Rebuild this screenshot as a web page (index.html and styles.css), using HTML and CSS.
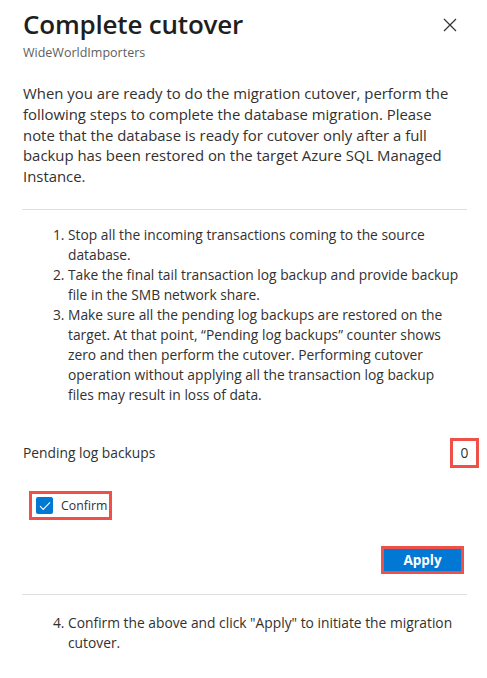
FILE: index.html
```html
<!DOCTYPE html>
<html>
<head>
<meta charset="utf-8">
<link rel="stylesheet" href="styles.css">
</head>
<body>
<div class="panel">
  <header class="head">
    <div class="titles">
      <h1 class="title">Complete cutover</h1>
      <div class="subtitle">WideWorldImporters</div>
    </div>
    <button class="close" aria-label="Close">
      <svg width="14" height="14" viewBox="0 0 14 14"><path d="M1 1L13 13M13 1L1 13" stroke="#323130" stroke-width="1.2" fill="none"/></svg>
    </button>
  </header>
  <p class="intro">When you are ready to do the migration cutover, perform the<br>following steps to complete the database migration. Please<br>note that the database is ready for cutover only after a full<br>backup has been restored on the target Azure SQL Managed<br>Instance.</p>
  <hr class="sep">
  <ol class="steps">
    <li>Stop all the incoming transactions coming to the source database.</li>
    <li>Take the final tail transaction log backup and provide backup file in the SMB network share.</li>
    <li>Make sure all the pending log backups are restored on the target. At that point, “Pending log backups” counter shows zero and then perform the cutover. Performing cutover operation without applying all the transaction log backup files may result in loss of data.</li>
  </ol>
  <div class="pending">
    <span>Pending log backups</span>
    <span class="count hl">0</span>
  </div>
  <div class="confirm-row">
    <label class="confirm hl">
      <span class="box"><svg width="12" height="10" viewBox="0 0 12 10"><path d="M1 5.2L4.2 8.4L11 1.4" stroke="#fff" stroke-width="1.1" fill="none"/></svg></span>
      <span>Confirm</span>
    </label>
  </div>
  <div class="actions">
    <button class="apply hl">Apply</button>
  </div>
  <hr class="sep sep2">
  <ol class="steps last" start="4">
    <li>Confirm the above and click "Apply" to initiate the migration cutover.</li>
  </ol>
</div>
</body>
</html>
```
FILE: styles.css
```css
* { box-sizing: border-box; }
html, body { margin: 0; padding: 0; background: #fff; }
body { font-family: "Open Sans", "Noto Sans", sans-serif; color: #323130; }
.panel { width: 487px; padding: 0 20px 0 22px; }
.head { display: flex; justify-content: space-between; align-items: flex-start; padding-top: 6px; }
.titles { padding-left: 1px; }
.title { margin: 0; font-size: 26px; font-weight: 600; line-height: 36px; color: #201f1e; letter-spacing: -0.2px; }
.subtitle { font-size: 12.5px; line-height: 18px; color: #605e5c; margin-top: 2px; }
.close { border: 0; background: none; padding: 0; margin: 12px 10px 0 0; width: 14px; height: 14px; }
.close svg { display: block; }
.intro { margin: 21px 0 0 1px; font-size: 14.9px; line-height: 20.8px; color: #323130; white-space: nowrap; }
.sep { border: 0; border-top: 1px solid #e1dfdd; margin: 22px 0 0 0; width: 445px; }
.steps { margin: 15px 0 0 0; padding-left: 46px; font-size: 13.8px; line-height: 20px; color: #323130; width: 440px; }
.pending { display: flex; justify-content: space-between; align-items: center; margin-top: 36px; font-size: 13.8px; width: 454px; padding-left: 1px; }
.hl { outline: 3px solid #f0504a; outline-offset: 0; }
.count { display: inline-block; width: 23px; height: 24px; line-height: 24px; text-align: center; }
.confirm-row { margin-top: 29px; padding-left: 10px; }
.confirm { display: inline-flex; align-items: center; gap: 8px; width: 77px; height: 23px; padding: 0 0 0 4px; font-size: 12.3px; }
.box { width: 17px; height: 17px; background: #0078d4; border-radius: 2px; display: inline-flex; align-items: center; justify-content: center; flex: none; }
.box svg { display: block; }
.actions { display: flex; justify-content: flex-end; margin-top: 32px; width: 439px; }
.apply { display: block; border: 0; background: #0078d4; color: #fff; font-family: inherit; font-weight: 700; font-size: 13.5px; width: 77px; height: 22px; padding: 0; line-height: 22px; }
.sep2 { margin-top: 23px; }
.steps.last { margin-top: 18px; }
```
